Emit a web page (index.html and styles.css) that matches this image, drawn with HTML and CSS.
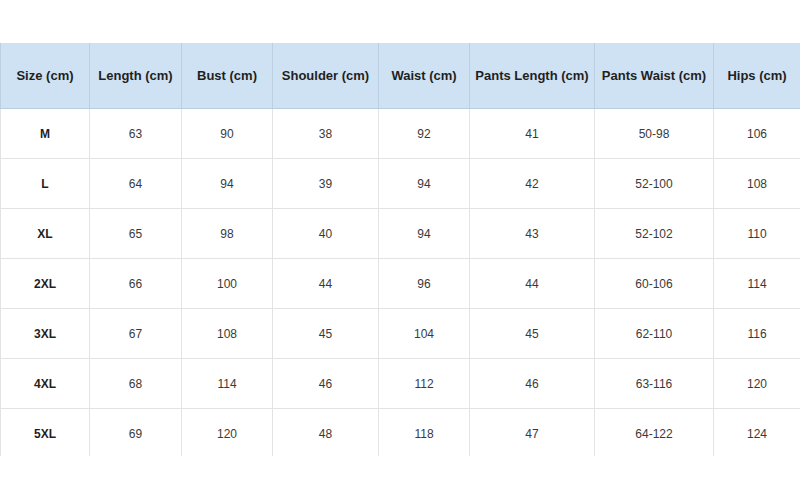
FILE: index.html
```html
<!DOCTYPE html>
<html>
<head>
<meta charset="utf-8">
<link rel="stylesheet" href="styles.css">
</head>
<body>
<div class="wrap">
  <div class="grid">
    <div class="c h">Size (cm)</div><div class="c h">Length (cm)</div><div class="c h">Bust (cm)</div><div class="c h">Shoulder (cm)</div><div class="c h">Waist (cm)</div><div class="c h">Pants Length (cm)</div><div class="c h">Pants Waist (cm)</div><div class="c h">Hips (cm)</div>
    <div class="c s">M</div><div class="c">63</div><div class="c">90</div><div class="c">38</div><div class="c">92</div><div class="c">41</div><div class="c">50-98</div><div class="c">106</div>
    <div class="c s">L</div><div class="c">64</div><div class="c">94</div><div class="c">39</div><div class="c">94</div><div class="c">42</div><div class="c">52-100</div><div class="c">108</div>
    <div class="c s">XL</div><div class="c">65</div><div class="c">98</div><div class="c">40</div><div class="c">94</div><div class="c">43</div><div class="c">52-102</div><div class="c">110</div>
    <div class="c s">2XL</div><div class="c">66</div><div class="c">100</div><div class="c">44</div><div class="c">96</div><div class="c">44</div><div class="c">60-106</div><div class="c">114</div>
    <div class="c s">3XL</div><div class="c">67</div><div class="c">108</div><div class="c">45</div><div class="c">104</div><div class="c">45</div><div class="c">62-110</div><div class="c">116</div>
    <div class="c s">4XL</div><div class="c">68</div><div class="c">114</div><div class="c">46</div><div class="c">112</div><div class="c">46</div><div class="c">63-116</div><div class="c">120</div>
    <div class="c s">5XL</div><div class="c">69</div><div class="c">120</div><div class="c">48</div><div class="c">118</div><div class="c">47</div><div class="c">64-122</div><div class="c">124</div>
  </div>
</div>
</body>
</html>
```
FILE: styles.css
```css
html, body {
  margin: 0;
  padding: 0;
  background: #ffffff;
}
body {
  font-family: "Liberation Sans", Arial, sans-serif;
}
.wrap {
  margin-top: 43px;
  width: 800px;
  height: 413px;
  overflow: hidden;
}
.grid {
  display: grid;
  grid-template-columns: 90px 92px 91px 106px 91px 125px 119px 86px;
  grid-template-rows: 66px repeat(7, 50px);
}
.c {
  box-sizing: border-box;
  display: flex;
  align-items: center;
  justify-content: center;
  border-right: 1px solid #e3e3e3;
  border-bottom: 1px solid #e3e3e3;
  font-size: 12px;
  color: #3a3a3a;
  white-space: nowrap;
}
.c:nth-child(8n+1) {
  border-left: 1px solid #e3e3e3;
}
.c:nth-child(8n) {
  border-right: none;
}
.h {
  background: #cfe2f3;
  border-right-color: #bcd0e4;
  border-bottom-color: #b6cbe0;
  font-weight: bold;
  font-size: 13px;
  color: #1f1f1f;
}
.h:first-child {
  border-left-color: #bcd0e4;
}
.s {
  font-weight: bold;
  color: #1f1f1f;
}
```
